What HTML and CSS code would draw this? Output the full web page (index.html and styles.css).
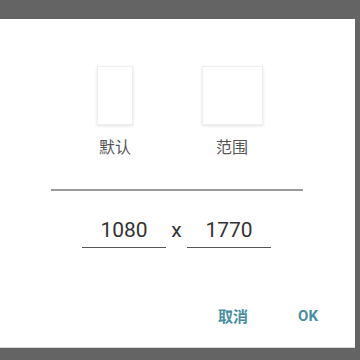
FILE: index.html
```html
<!DOCTYPE html>
<html lang="zh">
<head>
    <meta charset="UTF-8">
    <meta name="viewport" content="width=device-width, initial-scale=1.0">
    <title>分辨率</title>
    <link rel="stylesheet" href="styles.css">
</head>
<body>

<div class="dialog">
    <!-- Preset choices -->
    <div class="presets">
        <div class="preset">
            <div class="thumb thumb-portrait"></div>
            <div class="preset-label">默认</div>
        </div>
        <div class="preset">
            <div class="thumb thumb-square"></div>
            <div class="preset-label">范围</div>
        </div>
    </div>

    <div class="divider"></div>

    <!-- Size inputs -->
    <div class="size-row">
        <div class="size-field">1080</div>
        <div class="times">x</div>
        <div class="size-field">1770</div>
    </div>

    <div class="actions">
        <button class="action">取消</button>
        <button class="action action-ok">OK</button>
    </div>
</div>

</body>
</html>
```

FILE: styles.css
```css
body {
    margin: 0;
    padding: 0;
    background-color: #646464;
    font-family: Roboto, "Noto Sans CJK SC", sans-serif;
    height: 360px;
    overflow: hidden;
}
.dialog {
    margin-top: 19px;
    width: 355px;
    height: 328px;
    background-color: #fff;
    border-bottom: 1px solid #d8d8d8;
    display: flex;
    flex-direction: column;
}
.presets {
    display: flex;
    padding-top: 47px;
    padding-left: 80px;
    gap: 47px;
}
.preset {
    width: 70px;
    display: flex;
    flex-direction: column;
    align-items: center;
}
.thumb {
    height: 57px;
    background-color: #fff;
    border: 1px solid #eee;
    box-shadow: 0 1px 3px rgba(0, 0, 0, 0.12);
}
.thumb-portrait {
    width: 34px;
}
.thumb-square {
    width: 59px;
}
.preset-label {
    margin-top: 10px;
    font-family: "Noto Sans CJK SC", sans-serif;
    font-size: 16px;
    line-height: 22px;
    color: #555;
}
.divider {
    margin-top: 32px;
    margin-left: 51px;
    width: 252px;
    height: 2px;
    background-color: #9a9a9a;
}
.size-row {
    display: flex;
    align-items: flex-end;
    margin-top: 27px;
    padding-left: 82px;
}
.size-field {
    width: 84px;
    text-align: center;
    font-size: 21px;
    line-height: 24px;
    color: #333;
    padding-bottom: 5px;
    border-bottom: 1px solid #555;
}
.times {
    width: 21px;
    text-align: center;
    font-size: 21px;
    line-height: 24px;
    color: #333;
    padding-bottom: 6px;
}
.actions {
    display: flex;
    justify-content: flex-end;
    gap: 50px;
    margin-top: 58px;
    padding-right: 37px;
}
.action {
    background: none;
    border: none;
    padding: 0;
    font-family: "Noto Sans CJK SC", sans-serif;
    font-size: 15px;
    line-height: 20px;
    font-weight: bold;
    color: #4a8ea2;
    cursor: pointer;
}
.action-ok {
    font-family: Roboto, sans-serif;
}
```
